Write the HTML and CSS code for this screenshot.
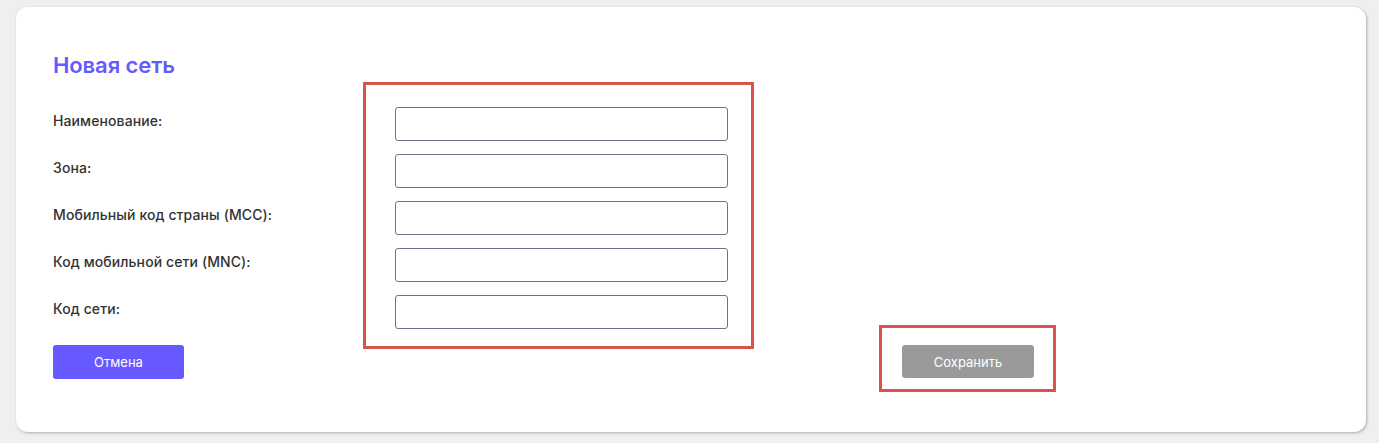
FILE: index.html
```html
<!DOCTYPE html>
<html lang="ru">
<head>
<meta charset="utf-8">
<title>Новая сеть</title>
<link rel="stylesheet" href="styles.css">
</head>
<body>
<div class="page">
  <section class="card">
    <h1 class="title">Новая сеть</h1>
    <form class="form">
      <label class="label" for="f1">Наименование:</label>
      <input class="field" id="f1" type="text">
      <label class="label" for="f2">Зона:</label>
      <input class="field" id="f2" type="text">
      <label class="label" for="f3">Мобильный код страны (MCC):</label>
      <input class="field" id="f3" type="text">
      <label class="label" for="f4">Код мобильной сети (MNC):</label>
      <input class="field" id="f4" type="text">
      <label class="label" for="f5">Код сети:</label>
      <input class="field" id="f5" type="text">
    </form>
    <div class="actions">
      <button class="btn btn-cancel" type="button">Отмена</button>
      <button class="btn btn-save" type="button">Сохранить</button>
    </div>
    <div class="mark mark-fields"></div>
    <div class="mark mark-save"></div>
  </section>
</div>
</body>
</html>
```

FILE: styles.css
```css
html, body {
  margin: 0;
  padding: 0;
  background: #efefef;
  font-family: Inter, "Noto Sans", sans-serif;
}

.page {
  padding: 7px 13px 11px 16px;
}

.card {
  position: relative;
  background: #ffffff;
  border-radius: 12px;
  box-shadow: 1px 1px 3px rgba(0, 0, 0, 0.28);
  padding: 45px 37px 53px 37px;
  height: 327px;
}

.title {
  margin: 0;
  font-size: 22px;
  line-height: 26px;
  font-weight: 600;
  color: #635bff;
  letter-spacing: -0.1px;
}

.form {
  margin-top: 29px;
  display: grid;
  grid-template-columns: 342px 333px;
  row-gap: 13px;
  align-items: center;
}

.label {
  font-size: 14px;
  font-weight: 500;
  color: #333333;
  line-height: 18px;
  margin-top: -6px;
  letter-spacing: 0.1px;
}

.field {
  box-sizing: border-box;
  width: 333px;
  height: 34px;
  margin: 0;
  border: 1px solid #70728a;
  border-radius: 3px;
  background: #fff;
  padding: 0 8px;
  font: inherit;
}

.actions {
  margin-top: 16px;
  display: flex;
  gap: 718px;
}

.btn {
  height: 34px;
  border: none;
  border-radius: 3px;
  color: #ffffff;
  font-family: inherit;
  font-size: 13px;
  font-weight: 400;
  padding: 0;
}

.btn-cancel {
  width: 131px;
  background: #6659ff;
}

.btn-save {
  width: 132px;
  height: 33px;
  background: #9a9a9a;
}

.mark {
  position: absolute;
  box-sizing: border-box;
  border: 3px solid #d9534a;
}

.mark-fields {
  left: 347px;
  top: 75px;
  width: 391px;
  height: 267px;
}

.mark-save {
  left: 863px;
  top: 318px;
  width: 177px;
  height: 67px;
}
```
